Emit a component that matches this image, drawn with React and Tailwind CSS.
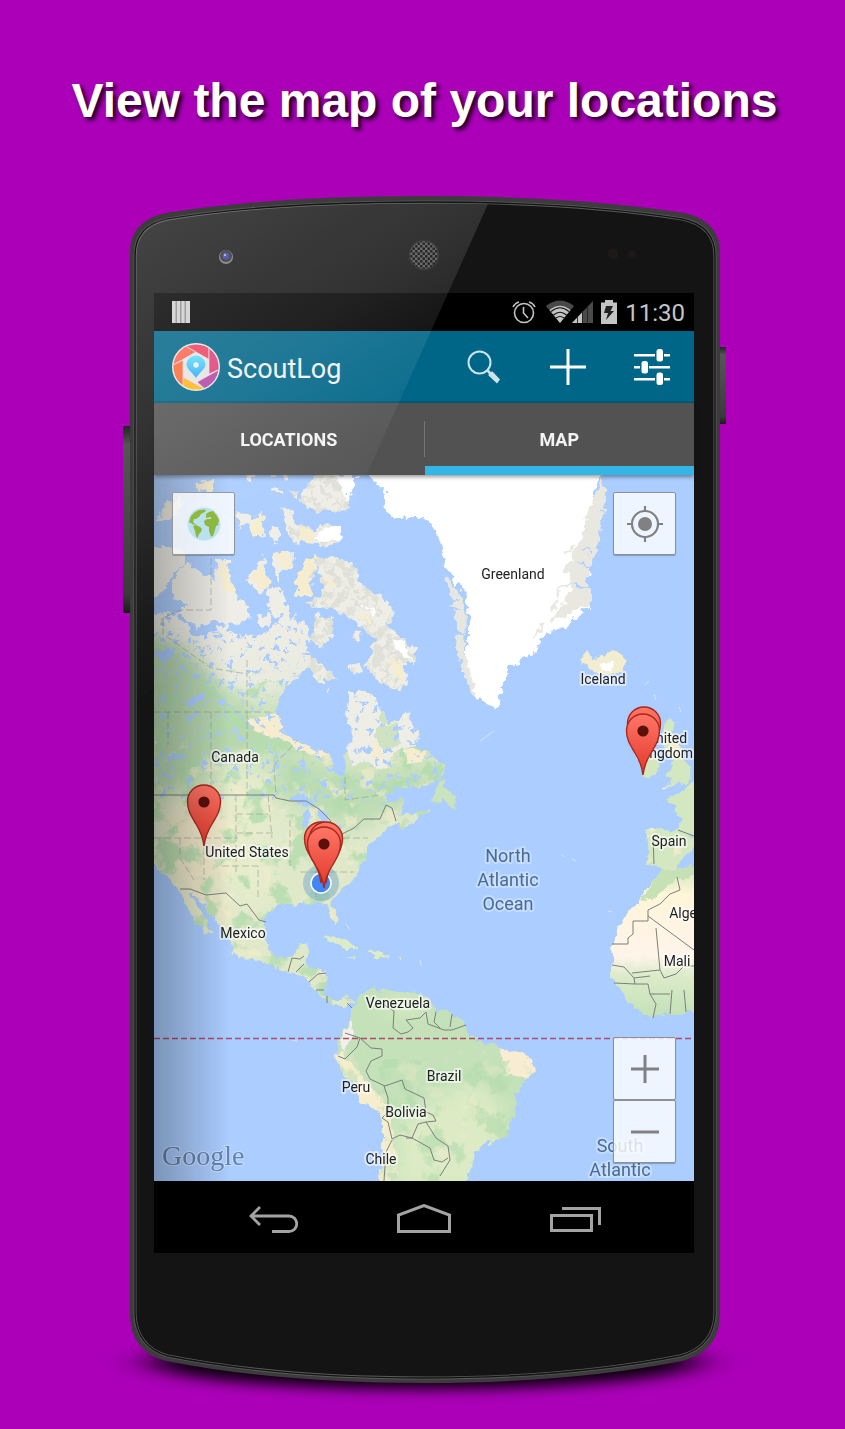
import React from "react";

const NORTH_AMERICA =
  "M150 614L165 612L178 617L192 627L190 634L202 636L215 630L228 630L243 635L262 636L272 628L279 617L287 612L292 620L296 612L299 624L305 621L311 640L306 650L313 662L306 670L298 678L290 684L285 691L278 700L276 712L281 724L285 735L300 742L315 750L328 755L332 758L333 768L340 777L345 777L345 765L342 755L348 748L353 738L350 728L346 714L348 700L348 691L360 691L373 694L379 704L384 714L391 721L399 723L406 710L411 722L418 734L415 746L426 750L433 756L440 760L445 767L444 774L436 782L424 786L410 786L396 790L388 798L379 806L391 801L401 798L404 806L399 816L408 812L430 810L418 820L402 829L398 822L386 830L379 836L373 842L368 848L366 858L360 866L357 876L350 884L341 890L334 898L331 901L335 912L339 921L336 926L331 918L328 906L322 903L312 903L300 903L290 906L280 905L268 912L264 922L264 935L268 948L276 956L286 957L293 953L297 945L310 943L308 955L304 965L316 968L326 972L325 985L324 993L332 1000L341 1000L348 996L355 1004L348 1003L342 1007L335 1004L325 999L315 990L309 981L295 975L280 969L256 962L236 956L231 946L222 928L212 915L203 905L193 893L190 893L198 908L206 922L213 935L206 932L195 920L188 911L185 900L176 888L168 878L158 868L150 858Z";
const SOUTH_AMERICA =
  "M352 1008L360 994L370 989L377 984L377 993L385 989L400 993L420 992L425 998L434 1007L436 1012L450 1012L462 1020L468 1032L476 1040L490 1044L505 1050L520 1052L532 1061L534 1071L525 1082L517 1092L515 1115L507 1135L490 1142L475 1153L473 1166L462 1185L378 1185L382 1168L382 1118L374 1110L360 1100L353 1085L345 1075L337 1065L335 1057L340 1046L338 1040L345 1028L351 1020Z";
const AFRICA =
  "M700 864L680 869L661 870L655 881L645 888L640 899L629 911L620 925L612 945L613 962L610 973L616 986L630 1004L642 1013L652 1018L662 1015L680 1015L700 1009Z";
const GREENLAND =
  "M366 470L376 484L386 494L382 504L391 517L406 519L421 517L429 521L436 532L442 548L446 566L455 582L464 590L468 606L469 640L465 655L461 668L469 688L480 702L490 703L497 713L500 696L508 670L526 658L537 649L546 632L562 629L576 618L590 608L588 598L582 584L590 572L580 560L592 548L597 535L592 520L602 505L594 492L602 470Z";

const ARCTIC = [
  "M150 548L165 545L178 548L188 561L174 572L166 590L150 598Z",
  "M172 585L178 570L190 562L204 575L214 580L216 562L227 562L232 580L235 592L250 608L248 620L228 625L214 619L200 628L186 620L176 614L185 606L176 600Z",
  "M154 522L166 505L180 496L184 506L170 520L160 520Z",
  "M196 484L212 479L212 490L200 493Z",
  "M236 510L244 514L256 518L262 510L264 536L256 536L248 526L238 528Z",
  "M246 576L256 566L264 556L268 574L270 584L260 592L250 582Z",
  "M270 530L278 526L283 538L276 543L270 537Z",
  "M274 552L296 554L292 566L282 572L278 582L273 574Z",
  "M268 588L278 586L286 600L288 612L278 617L270 612Z",
  "M282 508L292 510L298 524L314 530L316 544L292 542L288 532L284 524Z",
  "M314 530L326 524L340 525L342 540L330 546L314 544Z",
  "M298 500L308 486L315 474L340 474L357 476L350 492L350 506L342 512L324 512L308 508Z",
  "M270 489L282 487L282 492L272 493Z",
  "M244 474L254 474L256 480L248 480Z",
  "M268 472L292 472L286 479Z",
  "M290 490L297 490L296 498L291 497Z",
  "M298 596L298 575L305 560L317 556L314 575L311 596Z",
  "M316 560L335 557L350 562L360 574L358 582L372 590L388 602L395 612L392 622L386 622L400 638L418 650L414 664L404 664L408 685L396 692L382 682L364 668L372 650L374 640L366 630L350 618L334 610L316 608L302 602L318 597L325 590L318 575Z",
  "M316 614L332 616L334 634L326 642L318 650L312 638Z",
  "M312 658L322 664L330 672L337 680L320 682L312 674Z",
  "M348 666L360 662L362 672L352 675Z",
  "M352 632L360 630L361 640L354 642Z",
  "M258 616L270 614L272 624L262 628Z",
  "M324 690L331 687L328 693Z",
  "M220 626L230 623L226 632L216 632Z",
];
const EUROPE = [
  "M645 757L656 755L660 766L656 776L643 778L646 768Z",
  "M661 788L672 780L665 774L673 764L664 745L660 735L667 720L675 722L672 732L680 745L684 760L692 768L688 782L676 785Z",
  "M665 800L680 793L684 786L700 778L700 836L678 831L680 815L674 804Z",
  "M645 832L650 828L680 830L700 838L700 846L685 855L676 868L665 871L655 866L646 865L648 850Z",
];
const ICELAND =
  "M580 660L588 652L592 658L604 655L614 650L626 660L621 671L604 676L588 668Z";
const CARIBBEAN =
  "M322 938L335 936L350 943L362 950L345 948ZM366 953L376 951L390 956L376 959ZM348 957L356 957L352 960ZM397 957L402 957L402 959Z";
const NEWFOUNDLAND =
  "M430 802L440 780L444 778L443 786L453 794L457 804L452 808L442 800Z";

const BORDERS = [
  "M154 795H274L276 798L290 801H306L319 809L330 820L332 826L342 834L354 828L364 819H380L386 805L392 808L396 821",
  "M180 889L190 889L206 895L226 893L240 906L247 904L259 920L266 922",
  "M288 972L292 958L300 959L304 956M296 972L304 964M309 982L318 974L326 973M316 990H324M327 996V1003",
  "M352 1008L347 1003M384 1005L394 1011L393 1028L401 1034L408 1032L413 1028L406 1020L420 1018L426 1012L428 1024L444 1030L452 1030L466 1025M436 1012L434 1022L440 1028M452 1014L450 1027",
  "M345 1033L360 1038L357 1047L345 1059L338 1056M360 1038L371 1048L382 1049L382 1056L371 1061L366 1071L370 1079L385 1086L402 1080L405 1089L424 1098L426 1112L433 1115L436 1121L426 1122L418 1124L412 1138L406 1138M384 1086L388 1098L388 1112L382 1118L388 1122L392 1139L400 1135L412 1138L430 1148L434 1160L442 1162L448 1158M392 1140L386 1152L384 1181M426 1122L436 1138L448 1146L450 1160L440 1176",
  "M678 830L694 836M653 836L654 864M677 877L680 890L670 894L660 904L648 910V921L633 921V934L628 938V944L612 944M648 916L694 950M656 928L660 970L632 973M612 965L624 967L634 978L635 984L614 983M634 978L650 976M635 984L648 984L650 994L656 1004L653 1018M660 970L664 978L676 974L684 966L694 966M650 994L670 994M672 990L670 1014M684 990L686 1012",
];
const STATES =
  "M154 712H274M168 712V745M211 712V795M247 712V795M247 660V712M163 618V634L211 668L247 674M211 558V610H180L163 618M154 838H238M236 795V872M268 795L272 838M236 814H268M236 833H276M238 852H288M204 838V880M180 838V858L194 880M222 866H258V900M290 820V866M300 872H354M316 850V900M333 838H368M274 765L298 740M274 765L276 795M345 777V800L380 795";

const LABELS = [
  { text: "Greenland", x: 513, y: 579 },
  { text: "Iceland", x: 603, y: 684 },
  { text: "Canada", x: 235, y: 762 },
  { text: "United States", x: 247, y: 857 },
  { text: "Mexico", x: 243, y: 938 },
  { text: "United", x: 667, y: 743 },
  { text: "Kingdom", x: 665, y: 758 },
  { text: "Spain", x: 669, y: 846 },
  { text: "Algeria", x: 691, y: 918 },
  { text: "Mali", x: 677, y: 966 },
  { text: "Venezuela", x: 398, y: 1008 },
  { text: "Brazil", x: 444, y: 1081 },
  { text: "Peru", x: 356, y: 1092 },
  { text: "Bolivia", x: 406, y: 1117 },
  { text: "Chile", x: 381, y: 1164 },
];
const OCEANS = [
  { text: "North", x: 508, y: 862 },
  { text: "Atlantic", x: 508, y: 886 },
  { text: "Ocean", x: 508, y: 910 },
  { text: "South", x: 620, y: 1152 },
  { text: "Atlantic", x: 620, y: 1176 },
];
const PINS = [
  [204, 846],
  [321, 883],
  [326, 883],
  [324, 888],
  [644, 768],
  [643, 775],
];

function Pin({ x, y }) {
  return (
    <g transform={`translate(${x} ${y})`}>
      <path
        d="M0 0C-1 -8 -3 -14 -8 -22C-12 -29 -16.500 -35 -16.500 -44.500A16.500 16.500 0 0 1 16.500 -44.500C16.500 -35 12 -29 8 -22C3 -14 1 -8 0 0Z"
        fill="url(#pin)"
        stroke="#a8281c"
        strokeWidth="1.400"
      />
      <circle cy="-44" r="5.600" fill="#5c100c" />
    </g>
  );
}

function Noise({ id, frequency, seed, color, gain, offset }) {
  return (
    <filter id={id} x="0" y="0" width="1" height="1" colorInterpolationFilters="sRGB">
      <feTurbulence type="fractalNoise" baseFrequency={frequency} numOctaves="4" seed={seed} />
      <feColorMatrix values={`0 0 0 0 ${color[0]} 0 0 0 0 ${color[1]} 0 0 0 0 ${color[2]} ${gain} 0 0 0 ${offset}`} />
    </filter>
  );
}

function WorldMap() {
  return (
    <svg
      viewBox="154 475 540 706"
      preserveAspectRatio="xMidYMid slice"
      className="block size-full"
      role="img"
      aria-label="Map of locations"
    >
      <defs>
        <linearGradient id="pin" x1="0" y1="0" x2="0" y2="1">
          <stop offset="0" stopColor="#ff7667" />
          <stop offset="1" stopColor="#e2382a" />
        </linearGradient>
        <linearGradient id="climate" gradientUnits="userSpaceOnUse" x1="215" y1="620" x2="235" y2="960">
          <stop offset="0" stopColor="#eeede6" />
          <stop offset="0.180" stopColor="#eaebdf" />
          <stop offset="0.270" stopColor="#cfe3bf" />
          <stop offset="0.450" stopColor="#d3e5c0" />
          <stop offset="0.600" stopColor="#dfe9cb" />
          <stop offset="1" stopColor="#dfe8c8" />
        </linearGradient>
        <linearGradient id="desert" x1="0" y1="0" x2="0" y2="1">
          <stop offset="0" stopColor="#cfe5bd" />
          <stop offset="0.200" stopColor="#fff5d9" />
          <stop offset="0.600" stopColor="#fff4ea" />
          <stop offset="0.720" stopColor="#dcebca" />
          <stop offset="1" stopColor="#c2e0b8" />
        </linearGradient>
        <linearGradient id="drawer" x1="0" y1="0" x2="1" y2="0">
          <stop offset="0" stopColor="#000" stopOpacity="0.280" />
          <stop offset="1" stopColor="#000" stopOpacity="0" />
        </linearGradient>
        <filter id="coast" filterUnits="userSpaceOnUse" x="144" y="465" width="560" height="726">
          <feTurbulence type="fractalNoise" baseFrequency="0.120" numOctaves="3" seed="4" />
          <feDisplacementMap in="SourceGraphic" scale="9" xChannelSelector="R" yChannelSelector="G" />
        </filter>
        <filter id="fjords" filterUnits="userSpaceOnUse" x="144" y="465" width="560" height="726">
          <feTurbulence type="fractalNoise" baseFrequency="0.140" numOctaves="2" seed="9" />
          <feDisplacementMap in="SourceGraphic" scale="12" xChannelSelector="R" yChannelSelector="G" />
        </filter>
        <filter id="soft" x="-0.300" y="-0.300" width="1.600" height="1.600">
          <feGaussianBlur stdDeviation="9" />
        </filter>
        <Noise id="forest" frequency="0.045" seed="3" color={[0.7, 0.86, 0.68]} gain={8} offset={-4.2} />
        <Noise id="sand" frequency="0.050" seed="12" color={[0.965, 0.93, 0.81]} gain={7} offset={-4.2} />
        <Noise id="lakes" frequency="0.150" seed="7" color={[0.67, 0.8, 1]} gain={16} offset={-9.9} />
        <Noise id="rock" frequency="0.110" seed="5" color={[0.84, 0.85, 0.81]} gain={10} offset={-4.8} />
        <clipPath id="na"><path d={NORTH_AMERICA} /></clipPath>
        <clipPath id="sa"><path d={SOUTH_AMERICA} /></clipPath>
        <clipPath id="af"><path d={AFRICA} /></clipPath>
        <clipPath id="gl"><path d={GREENLAND} /></clipPath>
        <clipPath id="arctic"><path d={ARCTIC.join("")} /></clipPath>
        <clipPath id="eu"><path d={EUROPE.join("")} /></clipPath>
      </defs>

      <rect x="154" y="475" width="540" height="706" fill="#abcdff" />

      <g filter="url(#coast)">
        <g clipPath="url(#na)">
          <path d={NORTH_AMERICA} fill="url(#climate)" />
          <path d="M140 630L190 650L215 680L240 700L270 740L154 800Z" fill="#b7d7ae" filter="url(#soft)" />
          <path d="M270 745L340 775L440 770L420 800L350 830L275 795Z" fill="#bcdcb4" filter="url(#soft)" />
          <path d="M225 760L270 780L270 900L240 910L225 860Z" fill="#e6eccc" filter="url(#soft)" />
          <path d="M168 800L190 805L225 805L232 840L215 890L235 925L215 920L185 890L165 860Z" fill="#f1e8ca" filter="url(#soft)" />
          <rect x="154" y="670" width="300" height="340" filter="url(#forest)" opacity="0.800" />
          <rect x="154" y="740" width="300" height="270" filter="url(#sand)" opacity="0.600" />
          <path d="M340 685H405L422 745L395 750L384 770L366 764L352 766L340 730Z" fill="#eeede6" />
          <path d="M376 728L396 724L400 742L388 752L376 744ZM384 700L392 724L380 722Z" fill="#cfe3c2" />
          <path d="M368 746L376 742L384 758L374 762ZM404 748L424 750L422 762L408 764Z" fill="#f6edd0" />
          <path d="M248 722L275 712L298 732L332 748L332 757L300 752L280 738L262 736Z" fill="#f6ecd0" />
          <rect x="154" y="600" width="300" height="200" filter="url(#lakes)" />
        </g>
        <path d={NEWFOUNDLAND} fill="#c9e3bd" />
        <path d={CARIBBEAN} fill="#dcebc8" />
        <path
          d="M288 800L302 794L312 800L318 806L304 805ZM304 812L311 809L307 828L303 828ZM316 808L328 812L330 820L324 828L320 818ZM322 836L334 830L330 836ZM334 829L344 824L342 829ZM276 754L280 765L275 768ZM156 650L176 648L172 658L160 662ZM184 702L200 694L206 696L192 706Z"
          fill="#abcdff"
        />
        <g clipPath="url(#sa)">
          <path d={SOUTH_AMERICA} fill="#c4e1b9" />
          <path d="M335 1055L382 1108L395 1190H375L380 1120Z" fill="#f5edce" stroke="#f5edce" strokeWidth="12" />
          <path d="M375 1000L425 998L425 1015L395 1014ZM400 1120L470 1080L500 1100L500 1190H395Z" fill="#dcebc5" filter="url(#soft)" />
          <path d="M500 1048L540 1058L532 1080L505 1075Z" fill="#f8edd3" />
          <rect x="335" y="1060" width="205" height="125" filter="url(#forest)" opacity="0.600" />
          <rect x="335" y="1050" width="205" height="135" filter="url(#sand)" opacity="0.300" />
          <path d="M340 1040L352 1020L355 1030L344 1052Z" fill="#f4efec" />
        </g>
        <g clipPath="url(#af)">
          <path d={AFRICA} fill="url(#desert)" />
          <path d="M640 900L662 870L700 862L700 872L670 884L655 898Z" fill="#c6e2b5" />
        </g>
        <g clipPath="url(#eu)">
          <path d={EUROPE.join("")} fill="#d3e7c0" />
          <rect x="640" y="715" width="60" height="160" filter="url(#sand)" />
        </g>
        <path d={ICELAND} fill="#f2edcf" />
        <path d="M600 664L616 660L614 670L602 671Z" fill="#fff" />
      </g>

      <g filter="url(#fjords)">
        <g clipPath="url(#arctic)">
          <path d={ARCTIC.join("")} fill="#eeede6" />
          <rect x="290" y="475" width="130" height="215" filter="url(#rock)" opacity="0.600" />
          <path d="M298 596V575L305 558L320 556L311 575L314 596ZM275 553H285L293 568H284ZM218 564H230L236 592L224 592ZM250 576L262 562L270 584L262 590ZM298 528L314 530L314 545H302ZM252 512H263V536H254ZM196 478H214V494H200ZM326 576L336 580L334 588L328 586ZM360 612L372 618L370 626ZM390 660L402 666L406 682L396 678ZM160 516L180 498V510Z" fill="#f6edcf" />
          <path d="M318 530L340 524L344 538L318 542ZM336 475H357L348 500L340 488ZM362 604L375 612L372 614ZM392 638L404 642L412 662L398 652Z" fill="#fff" />
        </g>
        <g clipPath="url(#gl)">
          <path d={GREENLAND} fill="#fff" />
        </g>
        <path d="M446 575L460 592L466 612L465 650L476 696L472 698L462 668L456 650L457 622L450 604L458 600L447 588Z" fill="#e6e7e0" />
        <path d="M602 475L606 500L600 530L594 560L586 575L592 604L560 618L548 624L560 608L572 588L566 570L580 540L588 510L598 490Z" fill="#e8e8e0" />
        <path d="M575 545L568 556M576 566L562 572M570 580L556 596M560 600L552 610M545 625L532 640" stroke="#e6e8e4" strokeWidth="3" fill="none" />
        <path d="M576 560L586 566L598 570M572 582L582 588L594 590M581 545L590 552M448 606L460 610M452 630L464 634M600 512L610 520" stroke="#abcdff" strokeWidth="1.500" fill="none" />
      </g>
      <path d="M645 685L649 681M654 694L656 700M679 707L681 712M480 741L494 731M562 855L564 857M572 859L576 861M608 911L612 912M292 1040L297 1041M346 924L350 930M420 960L421 965" stroke="#d8e6f2" strokeWidth="1" fill="none" />

      <path d={STATES} fill="none" stroke="#8f9488" strokeOpacity="0.600" strokeWidth="0.900" strokeDasharray="7 3" />
      <path d={BORDERS.join("")} fill="none" stroke="#7b7f7b" strokeWidth="1" strokeLinejoin="round" />
      <path d="M154 1038.500H694" stroke="#b04a68" strokeWidth="1.300" strokeDasharray="6 3" />

      <g
        fontFamily="Roboto, sans-serif"
        textAnchor="middle"
        paintOrder="stroke"
        stroke="#fff"
        strokeOpacity="0.550"
        strokeWidth="4"
        strokeLinejoin="round"
      >
        <g fontSize="14" fill="#222">
          {LABELS.map((l) => (
            <text key={l.text} x={l.x} y={l.y}>{l.text}</text>
          ))}
        </g>
        <g fontSize="18" fill="#4a6a94" strokeOpacity="0.300">
          {OCEANS.map((l) => (
            <text key={l.y} x={l.x} y={l.y}>{l.text}</text>
          ))}
        </g>
      </g>

      <circle cx="321" cy="883" r="18" fill="#4a90c8" fillOpacity="0.350" />
      <circle cx="321" cy="883" r="10" fill="#4285f4" stroke="#fff" strokeWidth="1.500" />
      {PINS.map(([x, y]) => (
        <Pin key={`${x}-${y}`} x={x} y={y} />
      ))}
      <text
        x="162" y="1165" fontFamily="Liberation Serif, serif" fontSize="28"
        fill="#6583b0" stroke="#fff" strokeOpacity="0.350" strokeWidth="2" paintOrder="stroke"
      >
        Google
      </text>
      <rect x="154" y="475" width="76" height="706" fill="url(#drawer)" />
    </svg>
  );
}

function PhoneShell() {
  const body =
    "M130 252C130 230 144 218 166 213Q270 196 424 196Q578 196 684 213C706 218 720 230 720 252V1316C719 1341 705 1355 682 1361Q570 1383 424 1383Q278 1383 166 1361C144 1355 131 1341 130 1316Z";
  const face =
    "M135 256C135 234 148 223 168 219Q272 202 424 202Q576 202 682 219C702 223 715 234 715 256V1314C714 1337 702 1350 680 1356Q568 1378 424 1378Q280 1378 168 1356C147 1350 136 1337 135 1314Z";
  return (
    <svg
      viewBox="120 196 605 1187"
      preserveAspectRatio="none"
      className="pointer-events-none absolute inset-0 size-full overflow-visible"
      aria-hidden="true"
    >
      <defs>
        <linearGradient id="side" x1="0" y1="0" x2="0" y2="1">
          <stop offset="0" stopColor="#222" />
          <stop offset="0.100" stopColor="#555" />
          <stop offset="0.900" stopColor="#3a3a3a" />
          <stop offset="1" stopColor="#1a1a1a" />
        </linearGradient>
        <pattern id="mesh" width="5" height="5" patternUnits="userSpaceOnUse">
          <rect width="5" height="5" fill="#555" />
          <circle cx="1.250" cy="1.250" r="1.400" fill="#080808" />
          <circle cx="3.750" cy="3.750" r="1.400" fill="#080808" />
        </pattern>
        <filter id="ground" x="-0.300" y="-1" width="1.600" height="3">
          <feGaussianBlur stdDeviation="22 7" />
        </filter>
      </defs>
      <ellipse cx="424" cy="1362" rx="275" ry="27" fill="#000" fillOpacity="0.950" filter="url(#ground)" />
      <rect x="123" y="426" width="9" height="187" rx="1" fill="url(#side)" />
      <rect x="718" y="347" width="8" height="77" rx="1" fill="url(#side)" />
      <path d={body} fill="#3c3c3c" />
      <path d={face} fill="#141414" stroke="#5a5a5a" strokeWidth="3" />
      <path d={face} fill="none" stroke="#141414" strokeWidth="1.400" />
      <circle cx="226" cy="257" r="7" fill="#777" />
      <circle cx="226" cy="256" r="6" fill="#2c2c30" />
      <circle cx="226" cy="256" r="3.500" fill="#3a3aa0" />
      <circle cx="225" cy="255" r="1.200" fill="#aab" />
      <circle cx="424" cy="255" r="14.500" fill="url(#mesh)" stroke="#222" strokeWidth="1.500" />
      <circle cx="613" cy="254" r="5.500" fill="#1c1918" />
      <circle cx="632" cy="254" r="3.500" fill="#1d1a19" />
    </svg>
  );
}

function Gloss() {
  return (
    <svg
      viewBox="120 196 605 1187"
      preserveAspectRatio="none"
      className="pointer-events-none absolute inset-0 z-20 size-full"
      aria-hidden="true"
    >
      <defs>
        <linearGradient id="gloss" gradientUnits="userSpaceOnUse" x1="140" y1="200" x2="388" y2="574">
          <stop offset="0" stopColor="#fff" stopOpacity="0.210" />
          <stop offset="0.440" stopColor="#fff" stopOpacity="0.130" />
          <stop offset="0.800" stopColor="#fff" stopOpacity="0.030" />
          <stop offset="1" stopColor="#fff" stopOpacity="0" />
        </linearGradient>
      </defs>
      <path d="M136 256C136 234 148 223 168 219Q272 203 424 203L488 204L322 574L136 700Z" fill="url(#gloss)" />
    </svg>
  );
}

function Logo() {
  return (
    <svg viewBox="0 0 48 48" className="size-12" aria-hidden="true">
      <defs>
        <clipPath id="disc"><circle cx="24" cy="24" r="22.600" /></clipPath>
        <linearGradient id="drop" x1="0" y1="0" x2="0" y2="1">
          <stop offset="0" stopColor="#62e0fb" />
          <stop offset="1" stopColor="#2fa8f5" />
        </linearGradient>
      </defs>
      <circle cx="24" cy="24" r="24" fill="#e8e8e8" />
      <g clipPath="url(#disc)" stroke="#e3d5d8" strokeWidth="0.800">
        <path d="M15 4L37 16.500V-1H12Z" fill="#ee4463" />
        <path d="M37 -1V31L46 27L50 25V-1Z" fill="#dc4078" />
        <path d="M50 25L25 39L33 46L36 50H50Z" fill="#b646a6" />
        <path d="M36 50L33 46L11 34V50Z" fill="#ffb81e" />
        <path d="M11 50V17L1 22L-1 23V50Z" fill="#ff6a3a" />
        <path d="M-1 23L24 9L15 4L12 -1H-1Z" fill="#ff6450" />
      </g>
      <path d="M24 9L37 16.500V31L25 39L11 33.500V16.500Z" fill="#e4e4e4" />
      <path d="M24 35C21 30 14.500 26 14.500 21.500A9.500 9 0 0 1 33.500 21.500C33.500 26 27 30 24 35Z" fill="url(#drop)" />
      <circle cx="24" cy="22" r="2.700" fill="#e8f4f8" />
    </svg>
  );
}

function StatusBar() {
  return (
    <div className="flex h-[38px] items-center bg-black pr-[9px] pl-[18px] text-[#c4c4c4]">
      <svg viewBox="0 0 18 22" className="mr-auto h-[22px] w-[18px]" aria-hidden="true">
        <rect width="18" height="22" fill="#8c8c8c" />
        <path d="M0 0H3.500V22H0ZM5 0H8V22H5ZM9.500 0H12.500V22H9.500ZM14 0H18V22H14Z" fill="#d0d0d0" />
      </svg>
      <svg viewBox="0 0 24 24" className="mr-2.5 size-6" fill="none" stroke="currentColor" strokeWidth="1.600" aria-hidden="true">
        <circle cx="12" cy="13" r="9.500" />
        <path d="M11.500 7V13L16 18M1 7Q3 3 7 2M23 7Q21 3 17 2" />
      </svg>
      <svg viewBox="0 0 47 24" className="mr-2 h-6 w-[47px]" aria-hidden="true">
        <path d="M0 6Q14 -5 28 6L14 23Z" fill="#484848" />
        <path d="M3.500 10Q14 1.500 24.500 10L14 23Z" fill="#c4c4c4" />
        <path d="M5 11.500Q14 4 23 11.500M7.500 15Q14 9.500 20.500 15M10 18Q14 15 18 18" fill="none" stroke="#111" strokeWidth="1.200" />
        <path d="M26 23L47 1V23Z" fill="#4a4a4a" />
        <path d="M26 23L36 12.500V23Z" fill="#c4c4c4" />
        <path d="M31.500 16V23M36.500 11V23M41.500 6V23" stroke="#222" strokeWidth="0.900" />
      </svg>
      <svg viewBox="0 0 16 24" className="mr-2 h-6 w-4" aria-hidden="true">
        <path d="M0 2.500H4V0H12V2.500H16V24H0Z" fill="#c4c4c4" />
        <path d="M5 6H12L9.500 11H13L5 20L7 13H3Z" fill="#222" />
      </svg>
      <span className="pt-px text-2xl leading-9">11:30</span>
    </div>
  );
}

const actionClass = "flex h-[72px] w-[84px] shrink-0 items-center justify-center";

function ActionBar() {
  return (
    <header className="flex h-[72px] items-center bg-[#006688] pl-[18px] text-white shadow-[inset_0_-2px_0_rgba(0,0,0,0.12)]">
      <Logo />
      <h2 className="mr-auto pt-[3px] pl-[7px] text-[27px] leading-9 text-[#f3f3f3]">ScoutLog</h2>
      <button type="button" aria-label="Search" className={actionClass}>
        <svg viewBox="0 0 34 34" className="size-[34px]" aria-hidden="true">
          <circle cx="12.500" cy="12.500" r="11" fill="none" stroke="#cfe3ea" strokeWidth="2" />
          <path d="M20 20L23.500 23.500" stroke="#cfe3ea" strokeWidth="2.500" />
          <path d="M21.500 25.500Q21 22 25.500 21.500L33 29.500L30 33.500Z" fill="#cfe3ea" />
        </svg>
      </button>
      <button type="button" aria-label="Add location" className={actionClass}>
        <svg viewBox="0 0 36 36" className="size-9" stroke="#fff" strokeWidth="3" aria-hidden="true">
          <path d="M18 0V36M0 18H36" />
        </svg>
      </button>
      <button type="button" aria-label="Filters" className={actionClass}>
        <svg viewBox="0 0 36 36" className="size-9" fill="#fff" aria-hidden="true">
          <path d="M0 5H21V7.500H0ZM30 5H36V7.500H30ZM0 17H6V19.500H0ZM15 17H36V19.500H15ZM0 29H21V31.500H0ZM30 29H36V31.500H30Z" />
          <rect x="22.500" y="0" width="6.500" height="12.500" rx="2.500" />
          <rect x="7.500" y="12" width="6.500" height="12.500" rx="2.500" />
          <rect x="22.500" y="23.500" width="6.500" height="12.500" rx="2.500" />
        </svg>
      </button>
    </header>
  );
}

function Tabs() {
  return (
    <div role="tablist" className="relative z-10 flex h-[72px] items-stretch bg-[#525252] text-lg font-bold text-[#f3f3f3] shadow-[0_2px_4px_rgba(0,0,0,0.4)]">
      <button type="button" role="tab" aria-selected="false" className="flex-1 pt-0.5">
        LOCATIONS
      </button>
      <span className="h-9 w-px self-center bg-[#757575]" />
      <button type="button" role="tab" aria-selected="true" className="flex-1 border-b-[9px] border-[#33b5e5] pt-[11px]">
        MAP
      </button>
    </div>
  );
}

const mapButton =
  "flex size-[63px] items-center justify-center rounded-xs border border-[#8d9096] bg-white/80 text-[#808184] shadow-[0_1px_1px_rgba(0,0,0,0.25)]";

function MapView() {
  return (
    <main className="relative aspect-[540/706] w-full overflow-hidden">
      <WorldMap />
      <button type="button" aria-label="Map type" className={`${mapButton} absolute top-[17px] left-[18px]`}>
        <svg viewBox="0 0 34 34" className="size-[34px]" aria-hidden="true">
          <circle cx="17" cy="17" r="16.500" fill="#b5e0ee" />
          <path
            d="M2 15L4 9L8 5L12 3L18 2.500L19 4L16 6L14 7L12 10L9 12L7 12L6 15L8 17L10 18L6 17.500ZM6 19L9 18L13 20L15 22L14 25L12 27L10.500 31L9 29L8 24ZM19 7L22 5L26 4L30 9L32 13L31 18L29 19L28 23L26 29L24 29.500L22 24L22 20L18 18L17 14L20 12L24 12L24 10L19 11Z"
            fill="#87b32f"
          />
        </svg>
      </button>
      <button type="button" aria-label="My location" className={`${mapButton} absolute top-[17px] right-[18px]`}>
        <svg viewBox="0 0 36 36" className="size-9" fill="none" stroke="currentColor" strokeWidth="2.200" aria-hidden="true">
          <circle cx="18" cy="18" r="13" />
          <circle cx="18" cy="18" r="7" fill="currentColor" stroke="none" />
          <path d="M18 0V6M18 30V36M0 18H6M30 18H36" />
        </svg>
      </button>
      <div className="absolute right-[18px] bottom-[18px] flex flex-col">
        <button type="button" aria-label="Zoom in" className={mapButton}>
          <svg viewBox="0 0 28 28" className="size-7" stroke="currentColor" strokeWidth="3" aria-hidden="true">
            <path d="M14 0V28M0 14H28" />
          </svg>
        </button>
        <button type="button" aria-label="Zoom out" className={mapButton}>
          <svg viewBox="0 0 28 28" className="size-7" stroke="currentColor" strokeWidth="3" aria-hidden="true">
            <path d="M0 14H28" />
          </svg>
        </button>
      </div>
    </main>
  );
}

const navButton = "flex w-[151px] items-center justify-center";

function NavBar() {
  return (
    <nav className="flex h-[72px] items-stretch justify-center bg-black pt-1 text-[#a3a3a3]">
      <button type="button" aria-label="Back" className={navButton}>
        <svg viewBox="0 0 50 28" className="h-7 w-[50px]" fill="none" stroke="currentColor" strokeWidth="2.800" aria-hidden="true">
          <path d="M12 2L3 11L12 20M3 11H41A7.500 7.500 0 0 1 41 26.500H24" />
        </svg>
      </button>
      <button type="button" aria-label="Home" className={navButton}>
        <svg viewBox="0 0 54 30" className="h-[30px] w-[54px]" fill="none" stroke="currentColor" strokeWidth="3" aria-hidden="true">
          <path d="M1.500 27.500V11L27 1.500L52.500 11V27.500Z" />
        </svg>
      </button>
      <button type="button" aria-label="Recent apps" className={navButton}>
        <svg viewBox="0 0 52 26" className="h-[26px] w-[52px]" fill="none" stroke="currentColor" strokeWidth="3" aria-hidden="true">
          <path d="M2.500 9.500H42.500V24.500H2.500ZM13 2.500H50.500V19" />
        </svg>
      </button>
    </nav>
  );
}

export default function App() {
  return (
    <div className="min-h-screen overflow-hidden bg-[#ab00b8] pt-[73px] pb-[46px] font-[Roboto,sans-serif]">
      <h1 className="pr-4 pb-[67px] pl-5 text-center font-['Liberation_Sans',sans-serif] text-5xl leading-14 font-bold text-white [text-shadow:3px_3px_4px_rgba(0,0,0,0.85)]">
        View the map of your locations
      </h1>
      <div className="relative mx-auto w-full max-w-[605px] pt-[97px] pr-[31px] pb-[130px] pl-[34px]">
        <PhoneShell />
        <div className="relative">
          <StatusBar />
          <ActionBar />
          <Tabs />
          <MapView />
          <NavBar />
        </div>
        <Gloss />
      </div>
    </div>
  );
}
